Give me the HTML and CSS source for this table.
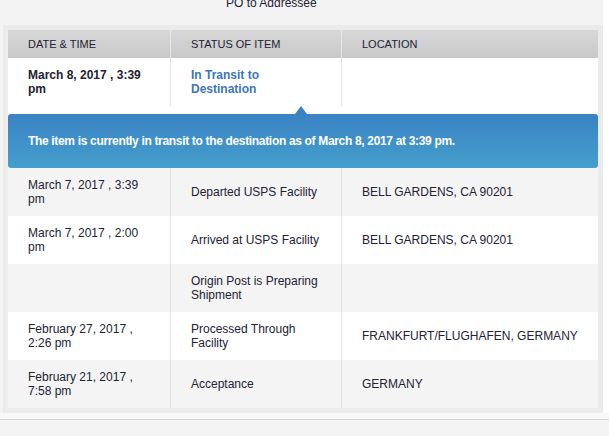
FILE: index.html
```html
<!DOCTYPE html>
<html lang="en">
<head>
<meta charset="utf-8">
<title>Tracking History</title>
<link rel="stylesheet" href="styles.css">
</head>
<body>
<div class="page">
  <div class="top-note">PO to Addressee</div>
  <div class="panel">
    <table class="tracking">
      <colgroup>
        <col class="c-date">
        <col class="c-status">
        <col class="c-loc">
      </colgroup>
      <thead>
        <tr>
          <th>DATE &amp; TIME</th>
          <th>STATUS OF ITEM</th>
          <th>LOCATION</th>
        </tr>
      </thead>
      <tbody>
        <tr class="row current">
          <td class="date">March 8, 2017 , 3:39 pm</td>
          <td class="status">In Transit to Destination</td>
          <td></td>
        </tr>
        <tr class="detail">
          <td colspan="3">
            <div class="callout">The item is currently in transit to the destination as of March 8, 2017 at 3:39 pm.</div>
          </td>
        </tr>
        <tr class="row alt">
          <td>March 7, 2017 , 3:39 pm</td>
          <td>Departed USPS Facility</td>
          <td>BELL GARDENS, CA 90201</td>
        </tr>
        <tr class="row">
          <td>March 7, 2017 , 2:00 pm</td>
          <td>Arrived at USPS Facility</td>
          <td>BELL GARDENS, CA 90201</td>
        </tr>
        <tr class="row alt">
          <td></td>
          <td>Origin Post is Preparing Shipment</td>
          <td></td>
        </tr>
        <tr class="row">
          <td>February 27, 2017 , 2:26 pm</td>
          <td>Processed Through Facility</td>
          <td>FRANKFURT/FLUGHAFEN, GERMANY</td>
        </tr>
        <tr class="row alt">
          <td>February 21, 2017 , 7:58 pm</td>
          <td>Acceptance</td>
          <td>GERMANY</td>
        </tr>
      </tbody>
    </table>
  </div>
</div>
<div class="footer-strip"></div>
</body>
</html>
```

FILE: styles.css
```css
html, body {
  margin: 0;
  padding: 0;
  background: #ffffff;
  font-family: "Liberation Sans", Arial, sans-serif;
  color: #222233;
  overflow: hidden;
}

.page {
  width: 603px;
  background: #f4f3f3;
  padding-bottom: 0;
}

.top-note {
  margin-top: -4px;
  height: 14px;
  margin-left: 226px;
  font-size: 12px;
  line-height: 14px;
  color: #222233;
}

.panel {
  margin: 15px 0 0 3px;
  width: 590px;
  padding: 5px;
  background: #ebebeb;
}

.tracking {
  width: 590px;
  table-layout: fixed;
  border-collapse: separate;
  border-spacing: 0;
  font-size: 12px;
  line-height: 14.4px;
}

.c-date { width: 162px; }
.c-status { width: 171px; }
.c-loc { width: 257px; }

.tracking th {
  height: 28px;
  padding: 0 20px;
  text-align: left;
  font-weight: normal;
  font-size: 11px;
  color: #222233;
  background: linear-gradient(#d8d8d8, #c8c8c8);
  vertical-align: middle;
}

.tracking th + th {
  border-left: 1px solid #e6e6e6;
}

.row td {
  height: 48px;
  padding: 0 20px;
  box-sizing: border-box;
  vertical-align: middle;
  background: #ffffff;
}

.row td + td {
  border-left: 1px solid #e6e6e6;
}

.row.alt td {
  background: #f4f4f4;
}

.current td {
  font-weight: bold;
}

.current .status {
  color: #3b76b8;
}

.detail td {
  padding: 8px 0 0;
  background: #ffffff;
}

.callout {
  position: relative;
  height: 54px;
  box-sizing: border-box;
  padding: 0 20px;
  display: flex;
  align-items: center;
  border-radius: 3px;
  background: linear-gradient(#3a82c4, #449fcb);
  color: #ffffff;
  font-weight: bold;
  font-size: 12px;
  letter-spacing: -0.33px;
}

.callout::before {
  content: "";
  position: absolute;
  left: 287px;
  top: -8px;
  border-left: 6px solid transparent;
  border-right: 6px solid transparent;
  border-bottom: 8px solid #3a82c4;
}

.footer-strip {
  height: 23px;
  box-sizing: border-box;
  background: #f4f4f4;
  border-top: 6px solid #f8f8f8;
  position: relative;
}

.footer-strip::before {
  content: "";
  display: block;
  height: 1px;
  background: #d8d8d8;
}
```
